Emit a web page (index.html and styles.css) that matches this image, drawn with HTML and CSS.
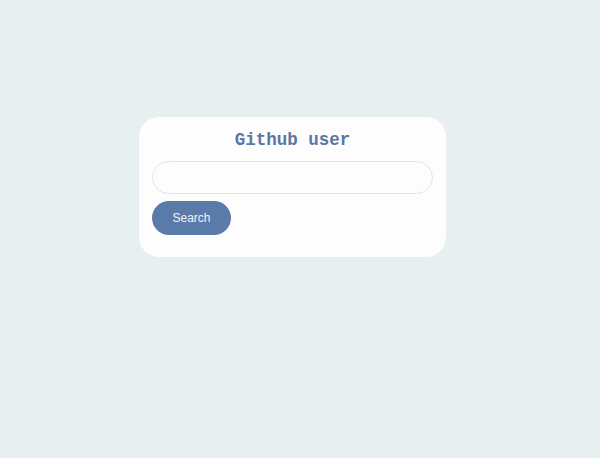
FILE: index.html
```html
<!DOCTYPE html>
<html>
<head>
<meta charset="utf-8">
<link rel="stylesheet" href="styles.css">
</head>
<body>
<main class="page">
  <section class="card">
    <h1 class="title">Github user</h1>
    <input class="search-input" type="text">
    <button class="search-btn">Search</button>
  </section>
</main>
</body>
</html>
```
FILE: styles.css
```css
html, body {
  margin: 0;
  padding: 0;
  background: #e8eff1;
  height: 100%;
}
.page {
  padding: 117px 0 0 139px;
}
.card {
  box-sizing: border-box;
  width: 307px;
  height: 140px;
  background: #fdfdfe;
  border-radius: 20px;
  padding: 12px 13px 0 13px;
  display: flex;
  flex-direction: column;
  align-items: flex-start;
}
.title {
  align-self: stretch;
  margin: 0;
  text-align: center;
  font-family: "Liberation Mono", monospace;
  font-weight: bold;
  font-size: 17.5px;
  line-height: 22px;
  color: #5a77a3;
}
.search-input {
  box-sizing: border-box;
  margin-top: 10px;
  width: 281px;
  height: 33px;
  border: 1px solid #e2e5e8;
  border-radius: 17px;
  background: #fdfdfe;
  outline: none;
  padding: 0 14px;
}
.search-btn {
  box-sizing: border-box;
  margin-top: 7px;
  width: 79px;
  height: 34px;
  border: none;
  border-radius: 17px;
  background: #5a7aa9;
  color: #eef2f8;
  font-family: "Liberation Sans", Arial, sans-serif;
  font-size: 12px;
  padding: 0;
}
```
